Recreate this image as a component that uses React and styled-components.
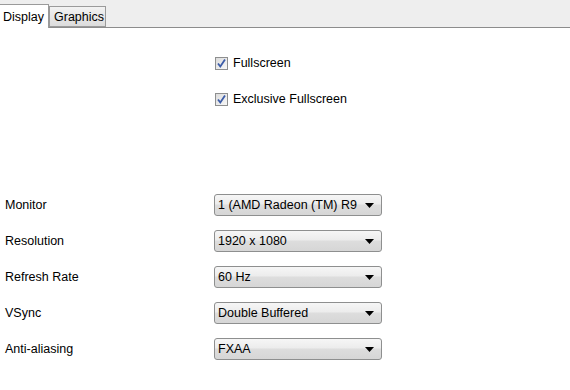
import React from 'react';
import styled, { createGlobalStyle } from 'styled-components';

const GlobalStyle = createGlobalStyle`
  html, body {
    margin: 0;
    padding: 0;
    background: #ffffff;
  }
  body {
    font-family: "Liberation Sans", Arial, sans-serif;
    font-size: 12px;
    color: #000000;
  }
`;

const Window = styled.div`
  width: 570px;
  height: 390px;
  background: #ffffff;
  display: flex;
  flex-direction: column;
  overflow: hidden;
`;

const TabBar = styled.div`
  height: 27px;
  background: #eeeeee;
  border-bottom: 1px solid #8c8c8c;
  display: flex;
  align-items: flex-end;
  box-sizing: content-box;
`;

const Tab = styled.div`
  box-sizing: border-box;
  height: ${(p) => (p.$active ? '24px' : '21px')};
  margin-bottom: ${(p) => (p.$active ? '-1px' : '0')};
  padding: ${(p) => (p.$active ? '0 6px 0 3px' : '0 2px 0 4px')};
  border-top: 1px solid #9a9a9a;
  border-right: 1px solid #9a9a9a;
  border-left: ${(p) => (p.$active ? 'none' : '1px solid #9a9a9a')};
  border-bottom: ${(p) => (p.$active ? 'none' : '1px solid #9a9a9a')};
  background: ${(p) =>
    p.$active ? '#ffffff' : 'linear-gradient(#f2f2f2, #dcdcdc)'};
  display: flex;
  align-items: center;
  font-size: 12.5px;
  color: #000000;
  width: ${(p) => (p.$active ? '49px' : '57px')};
`;

const Panel = styled.div`
  flex: 1;
  display: flex;
  flex-direction: column;
  padding-top: 27px;
`;

const CheckList = styled.div`
  display: flex;
  flex-direction: column;
  gap: 20px;
  padding-left: 215px;
`;

const CheckRow = styled.label`
  display: flex;
  align-items: center;
  gap: 5px;
  height: 16px;
  font-size: 12.5px;
`;

const Box = styled.span`
  width: 13px;
  height: 13px;
  box-sizing: border-box;
  border: 1px solid #8e8f8f;
  background: linear-gradient(135deg, #dcdcdc, #f8f8f8);
  display: flex;
  align-items: center;
  justify-content: center;
`;

const Form = styled.div`
  display: grid;
  grid-template-columns: 214px 168px;
  grid-auto-rows: 22px;
  row-gap: 14px;
  margin-top: 87px;
`;

const Label = styled.div`
  display: flex;
  align-items: center;
  padding-left: 5px;
  font-size: 12.5px;
`;

const Select = styled.div`
  box-sizing: border-box;
  border: 1px solid #8e8f8f;
  border-radius: 3px;
  background: linear-gradient(#f6f6f6 0%, #ececec 45%, #dddddd 50%, #d6d6d6 100%);
  display: flex;
  align-items: center;
  justify-content: space-between;
  padding: 0 7px 0 3px;
  font-size: 12.5px;
`;

const Check = () => (
  <Box>
    <svg width="11" height="11" viewBox="0 0 11 11">
      <path d="M2 5.5 L4.3 8.5 L9 1.5" fill="none" stroke="#3b5ca8" strokeWidth="1.8" />
    </svg>
  </Box>
);

const Arrow = () => (
  <svg width="9" height="5" viewBox="0 0 9 5">
    <path d="M0 0 H9 L4.5 5 Z" fill="#000000" />
  </svg>
);

const rows = [
  ['Monitor', '1 (AMD Radeon (TM) R9'],
  ['Resolution', '1920 x 1080'],
  ['Refresh Rate', '60 Hz'],
  ['VSync', 'Double Buffered'],
  ['Anti-aliasing', 'FXAA'],
];

const App = () => (
  <>
    <GlobalStyle />
    <Window>
      <TabBar>
        <Tab $active>Display</Tab>
        <Tab>Graphics</Tab>
      </TabBar>
      <Panel>
        <CheckList>
          <CheckRow>
            <Check />
            Fullscreen
          </CheckRow>
          <CheckRow>
            <Check />
            Exclusive Fullscreen
          </CheckRow>
        </CheckList>
        <Form>
          {rows.map(([label, value]) => (
            <React.Fragment key={label}>
              <Label>{label}</Label>
              <Select>
                <span>{value}</span>
                <Arrow />
              </Select>
            </React.Fragment>
          ))}
        </Form>
      </Panel>
    </Window>
  </>
);

export default App;
